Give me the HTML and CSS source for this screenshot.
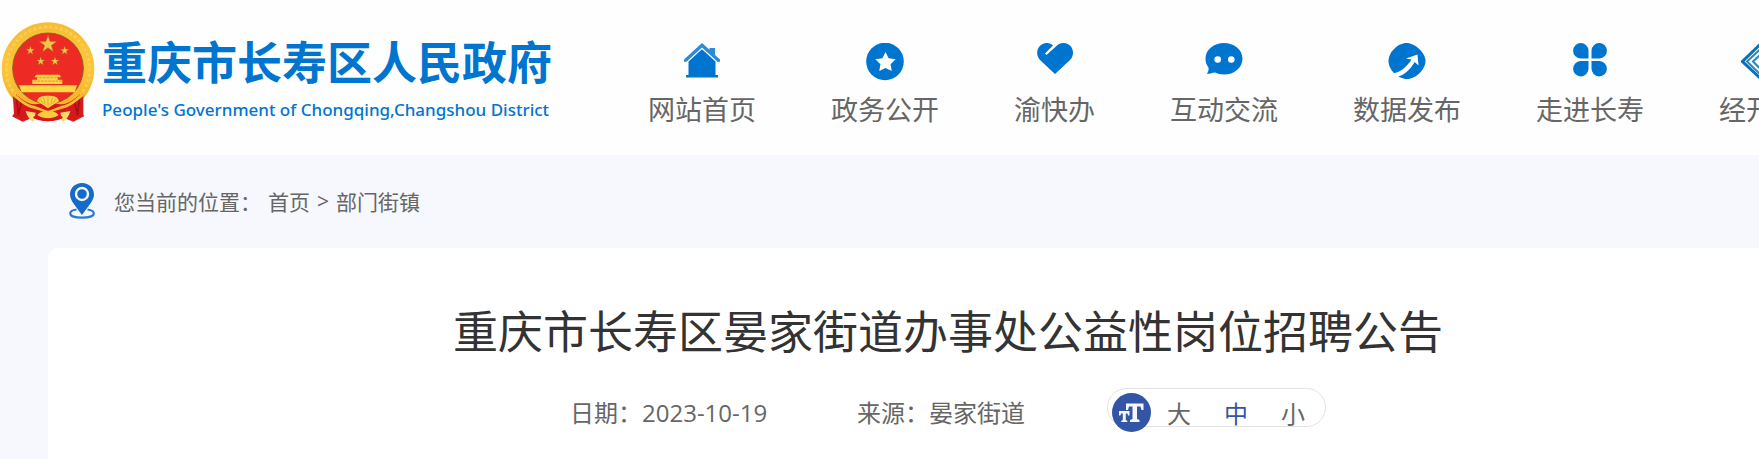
FILE: index.html
```html
<!DOCTYPE html>
<html lang="zh-CN">
<head>
    <meta charset="UTF-8">
    <meta name="viewport" content="width=device-width, initial-scale=1.0">
    <title>重庆市长寿区晏家街道办事处公益性岗位招聘公告</title>
    <link rel="stylesheet" href="styles.css">
</head>
<body>
    <header class="header">
        <a href="#" class="logo">
            <svg class="emblem" viewBox="0 0 282 300" aria-hidden="true">
                <defs>
                    <linearGradient id="gold" x1="0" y1="0" x2="0" y2="1">
                        <stop offset="0" stop-color="#f5bd35"/>
                        <stop offset="0.5" stop-color="#fbc63c"/>
                        <stop offset="1" stop-color="#f0ae26"/>
                    </linearGradient>
                    <path id="star" d="M0-10 2.3-3.1H9.5L3.7 1.2 5.9 8.1 0 3.8-5.9 8.1-3.7 1.2-9.5-3.1H-2.3Z"/>
                </defs>
                <ellipse cx="141" cy="140" rx="139" ry="139" fill="url(#gold)"/>
                <circle cx="141" cy="140" r="125" fill="none" stroke="#fcd050" stroke-width="8" stroke-dasharray="9 7"/>
                <circle cx="141" cy="139" r="106" fill="#ee2a24" stroke="#8d6418" stroke-width="3"/>
                <g fill="#f3c64b" stroke="#a87d22" stroke-width="0.6">
                    <use href="#star" transform="translate(141 67) scale(2.7)"/>
                    <use href="#star" transform="translate(88 86) scale(1.3)"/>
                    <use href="#star" transform="translate(191 86) scale(1.3)"/>
                    <use href="#star" transform="translate(119 118) scale(1.3)"/>
                    <use href="#star" transform="translate(162 118) scale(1.3)"/>
                </g>
                <path d="M106 158h70l4 8h-10v7h14v13H94v-13h14v-7h-8z" fill="#fbd246"/>
                <path d="M104 167h74M98 177h86" stroke="#c98620" stroke-width="2" stroke-dasharray="8 3"/>
                <path d="M54 190h174l-7 21H62z" fill="#fdd744"/>
                <path d="M35 213c20 8 40 36 70 34l36-6 36 6c30 2 50-26 70-34v62l2 8-32 16-26-10-50 9-50-9-26 10-32-16 6-8z" fill="#d6191c"/>
                <path d="M45 218l8 62M62 238l-10 40M237 218l-8 62M220 238l10 40" stroke="#a80f14" stroke-width="5" fill="none"/>
                <path d="M28 203c24 20 43 43 74 49l39 15 39-15c31-6 50-29 74-49l-8 20c-20 16-35 30-58 36l-47 14-47-14c-23-6-38-20-58-36z" fill="#f4bd32"/>
                <path d="M108 238c3-14 15-17 33-17s30 3 33 17l-15 9-18 12-18-12z" fill="#fdd34a"/>
                <path d="M141 224v30M128 226l5 23M154 226l-5 23M117 231l10 14M165 231l-10 14" stroke="#d69120" stroke-width="2"/>
                <path d="M74 267l30 5-6 27c-10-2-20-16-24-32zM208 267l-30 5 6 27c10-2 20-16 24-32z" fill="#fbd867"/>
                <path d="M109 279c12-17 52-17 64 0-20 13-44 13-64 0z" fill="#f9cb3d"/>
                <path d="M98 284c18 14 68 14 86 0" fill="none" stroke="#d9161a" stroke-width="6"/>
            </svg>
            <span class="logo-text">
                <span class="logo-name">重庆市长寿区人民政府</span>
                <span class="logo-english">People's Government of Chongqing,Changshou District</span>
            </span>
        </a>
        <nav class="nav">
            <a href="#" class="nav-item">
                <svg class="nav-icon" viewBox="0 0 38 38" aria-hidden="true">
                    <path d="M1 16.500 19 0l7.500 6.800V5H32v7l5 4.500v2.200h-2.500L19 4.500 3.500 18.700H1z" fill="#2a8bd8"/>
                    <path d="M5.500 18.500 19 6.300l13.500 12.200V32H35v2.500H3V32h2.500z" fill="#0075d0"/>
                </svg>
                <span>网站首页</span>
            </a>
            <a href="#" class="nav-item">
                <svg class="nav-icon" viewBox="0 0 38 38" aria-hidden="true">
                    <circle cx="19" cy="18.500" r="18.800" fill="#0075d0"/>
                    <path d="m19.500 9 3.100 6.300 7 1-5 4.900 1.100 6.900-6.200-3.200-6.200 3.200 1.100-6.900-5-4.900 7-1z" fill="#fff"/>
                </svg>
                <span>政务公开</span>
            </a>
            <a href="#" class="nav-item">
                <svg class="nav-icon" viewBox="0 0 38 38" aria-hidden="true">
                    <path d="M19 31 4.500 17.500C-.5 12.500.5 5 5 2c4-3 9-2.500 12 .5L9 10.500l1.500 1.500L21.500 2c4-3 9-2.500 12.500.5 4 4 4 10.500 0 14.500z" fill="#0075d0"/>
                </svg>
                <span>渝快办</span>
            </a>
            <a href="#" class="nav-item">
                <svg class="nav-icon" viewBox="0 0 38 38" aria-hidden="true">
                    <path d="M19 0c10 0 18.500 6.500 18.500 15.700S29 31.500 19 31.500c-3.500 0-6.500-.7-9-2C7.500 29.500 5 31 2 31c1-2 2-4 1.500-6.500C1.500 22 .5 19 .5 15.700.500 6.500 9 0 19 0z" fill="#0075d0"/>
                    <circle cx="12.700" cy="16.500" r="3.300" fill="#fff"/>
                    <circle cx="26.300" cy="16.500" r="3.300" fill="#fff"/>
                </svg>
                <span>互动交流</span>
            </a>
            <a href="#" class="nav-item">
                <svg class="nav-icon" viewBox="0 0 38 38" aria-hidden="true">
                    <path d="M18.500 0C27 0 37.500 10 37.500 18c0 8-9.500 18-18.500 18S.5 27 .5 18 10 0 18.500 0z" fill="#0075d0"/>
                    <path d="M5 30.500c7-1.500 13-5.500 18.500-14L18 15.500l11.500-4 1 11-3.800-3.500C22 27 16 32 9.500 34z" fill="#fff"/>
                </svg>
                <span>数据发布</span>
            </a>
            <a href="#" class="nav-item">
                <svg class="nav-icon" viewBox="0 0 38 38" aria-hidden="true">
                    <path d="M17.500 15.500H9.500A7.700 7.700 0 1 1 17.500 7.500zM20.500 15.500h8a7.700 7.700 0 1 0-8-8zM17.500 18h-8a7.700 7.700 0 1 0 8 7.500zM20.500 18h8a7.700 7.700 0 1 1-8 7.500z" fill="#0075d0"/>
                </svg>
                <span>走进长寿</span>
            </a>
            <a href="#" class="nav-item">
                <svg class="nav-icon" viewBox="0 0 38 38" aria-hidden="true">
                    <path d="M19 1.500 1.500 18.500 19 35l17.500-16.500z" fill="none" stroke="#0a70b8" stroke-width="3"/>
                    <path d="M19 6.500 6 18.500 19 31l13-12.500zM19 12l-7 6.500 7 7 7-7z" fill="none" stroke="#2586c6" stroke-width="2"/>
                </svg>
                <span>经开区</span>
            </a>
        </nav>
    </header>

    <main class="container">
        <div class="breadcrumb">
            <svg class="pin" viewBox="0 0 26 36" aria-hidden="true">
                <path d="M7.500 26.500C3 27.200 1.200 28.700 1.200 30.400c0 2.600 5.200 4.300 11.800 4.300s11.800-1.700 11.800-4.300c0-1.700-1.800-3.200-6.300-3.900" fill="none" stroke="#2a7bd0" stroke-width="2.200"/>
                <path d="M13 0c7 0 12 5 12 11.500 0 6-6 12-12 20.500C7 23.500 1 17.500 1 11.500 1 5 6 0 13 0z" fill="#146bc8"/>
                <circle cx="13" cy="11" r="6" fill="none" stroke="#f5f8fd" stroke-width="2.400"/>
            </svg>
            <span>您当前的位置：</span>
            <a href="#">首页</a>
            <span>&gt;</span>
            <a href="#">部门街镇</a>
        </div>

        <article class="article">
            <h1>重庆市长寿区晏家街道办事处公益性岗位招聘公告</h1>
            <div class="meta">
                <span class="date">日期：2023-10-19</span>
                <span>来源：晏家街道</span>
                <div class="font-size">
                    <svg class="font-icon" viewBox="0 0 39 39" aria-hidden="true">
                        <circle cx="19.500" cy="19.500" r="19.500" fill="#3355a5"/>
                        <path d="M14 10.500h17.500v6.500H29.500l-1-3.500h-3.500v12.500l2.500 1v2h-9.500v-2l2.500-1V13.500H17L16 17h-2z" fill="#f4f6fb"/>
                        <path d="M7 18h10.500v4.500H16l-.5-2h-1.700v6.500l1.500.7V29H9.300v-1.300l1.500-.7v-6.500H9l-.5 2H7z" fill="#f4f6fb"/>
                    </svg>
                    <button type="button">大</button>
                    <button type="button" class="active">中</button>
                    <button type="button">小</button>
                </div>
            </div>
        </article>
    </main>
</body>
</html>
```

FILE: styles.css
```css
* {
    box-sizing: border-box;
}

body {
    margin: 0;
    min-height: 100vh;
    display: flex;
    flex-direction: column;
    overflow: hidden;
    background: #f6f8fd;
    color: #666;
    font-family: "Open Sans", "Noto Sans CJK SC", sans-serif;
}

a {
    color: inherit;
    text-decoration: none;
}

.header {
    display: flex;
    align-items: flex-start;
    height: 155px;
    background: #fefefe;
}

.logo {
    display: flex;
    flex-shrink: 0;
    gap: 7px;
    margin-right: 96px;
    padding: 22px 0 0 1px;
    color: #0075d0;
}

.emblem {
    width: 94px;
    height: 100px;
}

.logo-text {
    display: flex;
    flex-direction: column;
    padding-top: 15px;
}

.logo-name {
    font-family: "Noto Sans CJK SC", sans-serif;
    font-size: 45px;
    font-weight: 700;
    line-height: 48px;
}

.logo-english {
    padding-top: 13px;
    font-family: "Noto Sans", sans-serif;
    font-size: 17px;
    font-weight: 500;
    line-height: 24px;
    white-space: nowrap;
}

.nav {
    display: flex;
    gap: 75px;
    padding-top: 43px;
}

.nav-item {
    display: flex;
    flex-direction: column;
    align-items: center;
    flex-shrink: 0;
    gap: 11px;
    font-size: 27px;
    line-height: 36px;
    white-space: nowrap;
}

.nav-icon {
    width: 38px;
    height: 38px;
}

.container {
    flex: 1;
    display: flex;
    flex-direction: column;
    min-width: 1800px;
    margin: 0 48px;
}

.breadcrumb {
    display: flex;
    align-items: center;
    gap: 7px;
    height: 93px;
    padding: 0 0 2px 21px;
    font-size: 21px;
}

.pin {
    width: 26px;
    height: 36px;
    margin-right: 12px;
}

.article {
    flex: 1;
    padding: 54px 0 20px;
    background: #fff;
    border-radius: 10px 10px 0 0;
    text-align: center;
}

h1 {
    margin: 0;
    color: #333;
    font-size: 45px;
    font-weight: 400;
    line-height: 60px;
}

.meta {
    display: flex;
    justify-content: center;
    align-items: flex-start;
    gap: 82px;
    padding-top: 26px;
    font-size: 24px;
    line-height: 50px;
}

.date {
    min-width: 205px;
    text-align: left;
}

.font-size {
    display: flex;
    align-items: flex-start;
    gap: 33px;
    height: 39px;
    padding: 0 20px 0 4px;
    border: 1px solid #e3e3e3;
    border-radius: 20px;
}

.font-icon {
    width: 39px;
    height: 39px;
    margin: 4px -17px 0 0;
}

.font-size button {
    padding: 0;
    border: 0;
    background: none;
    color: inherit;
    font: inherit;
    cursor: pointer;
}

.font-size .active {
    color: #3355a5;
}
```
